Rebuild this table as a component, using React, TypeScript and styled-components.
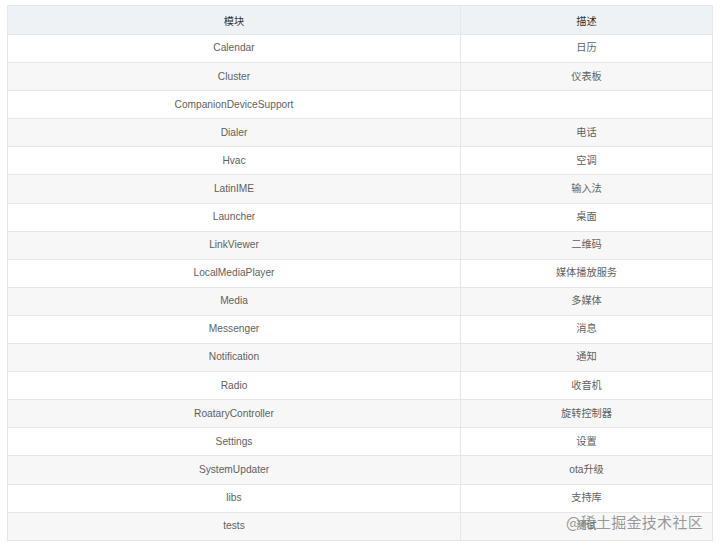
import styled, { createGlobalStyle } from 'styled-components';

const GlobalStyle = createGlobalStyle`
  html, body {
    margin: 0;
    padding: 0;
    background: #ffffff;
  }
  body {
    font-family: "Liberation Sans", Arial, "Noto Sans CJK SC", sans-serif;
  }
`;

const Page = styled.div`
  position: relative;
  width: 720px;
  height: 547px;
  padding: 5px 8px 0 7px;
  box-sizing: border-box;
  background: #fff;
`;

const Table = styled.table`
  width: 705px;
  border-collapse: collapse;
  table-layout: fixed;
  font-size: 10.2px;
  color: #5f5f5f;
`;

const HeadCell = styled.th`
  height: 28px;
  padding: 0;
  background: #eff2f4;
  border: 1px solid #e6e8ea;
  font-weight: normal;
  color: #333;
  text-align: center;
`;

const Row = styled.tr<{ $striped: boolean }>`
  background: ${(p) => (p.$striped ? '#f7f7f7' : '#ffffff')};
`;

const Cell = styled.td`
  height: 27.1px;
  padding: 0;
  border: 1px solid #e6e6e6;
  text-align: center;
  line-height: 1;
`;

const Watermark = styled.div`
  position: absolute;
  right: 17px;
  bottom: 15px;
  font-family: "Noto Sans CJK SC", sans-serif;
  font-size: 15px;
  letter-spacing: 0.3px;
  color: rgba(120, 120, 120, 0.75);
  pointer-events: none;
`;

const rows: [string, string][] = [
  ['Calendar', '日历'],
  ['Cluster', '仪表板'],
  ['CompanionDeviceSupport', ''],
  ['Dialer', '电话'],
  ['Hvac', '空调'],
  ['LatinIME', '输入法'],
  ['Launcher', '桌面'],
  ['LinkViewer', '二维码'],
  ['LocalMediaPlayer', '媒体播放服务'],
  ['Media', '多媒体'],
  ['Messenger', '消息'],
  ['Notification', '通知'],
  ['Radio', '收音机'],
  ['RoataryController', '旋转控制器'],
  ['Settings', '设置'],
  ['SystemUpdater', 'ota升级'],
  ['libs', '支持库'],
  ['tests', '测试'],
];

const App = () => {
  return (
    <>
      <GlobalStyle />
      <Page>
        <Table>
          <colgroup>
            <col style={{ width: 453 }} />
            <col style={{ width: 252 }} />
          </colgroup>
          <thead>
            <tr>
              <HeadCell>模块</HeadCell>
              <HeadCell>描述</HeadCell>
            </tr>
          </thead>
          <tbody>
            {rows.map(([name, desc], i) => (
              <Row key={name} $striped={i % 2 === 1}>
                <Cell>{name}</Cell>
                <Cell>{desc}</Cell>
              </Row>
            ))}
          </tbody>
        </Table>
        <Watermark>@稀土掘金技术社区</Watermark>
      </Page>
    </>
  );
};

export default App;
